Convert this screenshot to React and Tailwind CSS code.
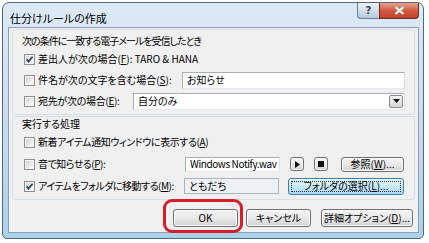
import React from 'react';

const U = ({ children }) => <span className="underline underline-offset-[1px]">{children}</span>;

const Check = ({ checked }) => (
    <svg width="11" height="11" viewBox="0 0 11 11" className="shrink-0">
        <defs>
            <linearGradient id="cbFill" x1="0" y1="0" x2="1" y2="1">
                <stop offset="0" stopColor="#d2d2d2" />
                <stop offset="1" stopColor="#fbfbfb" />
            </linearGradient>
        </defs>
        <rect x="0.5" y="0.5" width="10" height="10" fill="#f6f6f6" stroke="#8e8f8f" />
        <rect x="2" y="2" width="7" height="7" fill="url(#cbFill)" />
        {checked && <path d="M2.6 5.4 L4.5 7.6 L8.6 2.8" stroke="#23406e" strokeWidth="1.7" fill="none" />}
    </svg>
);

const Btn = ({ className = '', children }) => (
    <div className={`h-[18px] rounded-[3px] border border-[#707070] bg-linear-to-b from-[#f4f4f4] via-[#e9e9e9] to-[#d2d2d2] shadow-[inset_0_0_0_1px_#fbfbfb] flex items-center justify-center text-[10px] leading-none whitespace-nowrap ${className}`}>
        {children}
    </div>
);

const Box = ({ className = '', children }) => (
    <div className={`border border-[#abadb3] border-b-[#e3e9ef] border-r-[#dbdfe6] flex items-center pl-[4px] text-[10px] leading-none whitespace-nowrap overflow-hidden ${className}`}>
        {children}
    </div>
);

const Row = ({ className = '', children }) => (
    <div className={`h-[20px] flex items-center pl-[11px] ${className}`}>{children}</div>
);

const Label = ({ checked, className = '', children }) => (
    <div className="flex items-center gap-[3px] text-[10px] leading-none whitespace-nowrap">
        <Check checked={checked} />
        <span className={className}>{children}</span>
    </div>
);

export default function App() {
    return (
        <div className="w-[429px] h-[243px] bg-white overflow-hidden text-black font-['Noto_Sans_CJK_JP',sans-serif] [font-feature-settings:'palt']">
            {/* window frame */}
            <div className="ml-[2px] mt-[2px] w-[422px] h-[237px] rounded-t-[7px] rounded-b-[5px] border border-[#55657a] bg-linear-to-b from-[#dde9f6] via-[#c9dcef] to-[#a9d2ec] flex flex-col pl-[5px] pr-[4px] pb-[5px]">
                {/* title bar */}
                <div className="h-[24px] shrink-0 flex items-start">
                    <div className="pt-[9px] pl-[2px] text-[11px] leading-[13px]">仕分けルールの作成</div>
                    <div className="ml-auto flex">
                        <div className="w-[22px] h-[16px] rounded-bl-[4px] border border-t-0 border-r-0 border-[#6a7d95] bg-linear-to-b from-[#eef3f9] to-[#b6c9df] flex items-center justify-center text-[10px] leading-none text-[#3a4656] font-bold font-['DejaVu_Sans',sans-serif]">?</div>
                        <div className="w-[40px] h-[16px] rounded-br-[4px] border border-t-0 border-[#6e2a20] bg-linear-to-b from-[#e9a190] via-[#d25a41] to-[#c0402a] flex items-center justify-center">
                            <svg width="11" height="9" viewBox="0 0 11 9">
                                <path d="M1.5 1 L9.5 8 M9.5 1 L1.5 8" stroke="#fff" strokeWidth="2.2" />
                            </svg>
                        </div>
                    </div>
                </div>

                {/* client area */}
                <div className="flex-1 bg-[#f0f0f0] border border-[#8d9fb4] flex flex-col">
                    {/* conditions */}
                    <div className="mx-[3px] mt-[1px] border border-[#d5dfe5] rounded-[3px] pt-[4px] pb-[3px] pr-[9px] flex flex-col gap-[1px]">
                        <div className="h-[14px] pl-[9px] text-[10px] leading-[14px] tracking-[-1px]">次の条件に一致する電子メールを受信したとき</div>
                        <Row>
                            <Label checked>差出人が次の場合(<U>F</U>): TARO &amp; HANA</Label>
                        </Row>
                        <Row>
                            <Label>件名が次の文字を含む場合(<U>S</U>):</Label>
                            <Box className="ml-auto w-[223px] h-[17px] bg-white">お知らせ</Box>
                        </Row>
                        <Row>
                            <Label className="tracking-[-0.3px]">宛先が次の場合(<U>E</U>):</Label>
                            <Box className="ml-auto w-[272px] h-[17px] bg-white pr-[1px]">
                                <span>自分のみ</span>
                                <div className="ml-auto w-[14px] h-[13px] border border-[#8a8a8a] rounded-[2px] bg-linear-to-b from-[#f4f4f4] to-[#d6d6d6] flex items-center justify-center">
                                    <svg width="7" height="4" viewBox="0 0 7 4">
                                        <path d="M0 0 H7 L3.5 4 Z" fill="#111" />
                                    </svg>
                                </div>
                            </Box>
                        </Row>
                    </div>

                    {/* actions */}
                    <div className="mx-[3px] mt-[1px] border border-[#d5dfe5] rounded-[3px] pb-[3px] pr-[10px] flex flex-col gap-[2px]">
                        <div className="h-[14px] pl-[9px] text-[10px] leading-[14px] mb-[-1px]">実行する処理</div>
                        <Row>
                            <Label className="tracking-[-0.4px]">新着アイテム通知ウィンドウに表示する(<U>A</U>)</Label>
                        </Row>
                        <Row>
                            <Label className="tracking-[-0.5px]">音で知らせる(<U>P</U>):</Label>
                            <div className="ml-auto flex items-center">
                                <Box className="w-[95px] h-[15px] bg-white tracking-[-0.4px] pl-[3px]">Windows Notify.wav</Box>
                                <Btn className="ml-[10px] w-[14px] !h-[14px] rounded-[2px]">
                                    <svg width="5" height="7" viewBox="0 0 5 7"><path d="M0 0 L5 3.5 L0 7 Z" fill="#111" /></svg>
                                </Btn>
                                <Btn className="ml-[10px] w-[14px] !h-[14px] rounded-[2px]">
                                    <svg width="6" height="6" viewBox="0 0 6 6"><rect width="6" height="6" fill="#111" /></svg>
                                </Btn>
                                <Btn className="ml-[13px] w-[63px] !h-[15px]">参照(<U>W</U>)...</Btn>
                            </div>
                        </Row>
                        <Row>
                            <Label checked className="tracking-[-0.5px]">アイテムをフォルダに移動する(<U>M</U>):</Label>
                            <div className="ml-auto flex items-center">
                                <Box className="w-[95px] h-[16px] bg-[#eef1f4] !border-[#a9b3bf]">ともだち</Box>
                                <div className="ml-[9px] w-[116px] h-[17px] rounded-[3px] border border-[#3c7fb1] bg-linear-to-b from-[#eaf6fd] via-[#c9e8f8] to-[#a8d7f2] p-[2px]">
                                    <div className="h-full border border-dotted border-[#333] flex items-center justify-center text-[10px] leading-none">
                                        フォルダの選択(<U>L</U>)...
                                    </div>
                                </div>
                            </div>
                        </Row>
                    </div>

                    {/* buttons */}
                    <div className="mt-[9px] mr-[5px] flex justify-end">
                        <div className="relative">
                            <Btn className="w-[65px]">OK</Btn>
                            <div className="absolute -left-[10px] -right-[5px] -top-[10px] -bottom-[6px] border-[3px] border-[#d51f2b] rounded-[9px]" />
                        </div>
                        <Btn className="ml-[8px] w-[65px]">キャンセル</Btn>
                        <Btn className="ml-[10px] w-[92px]">詳細オプション(<U>D</U>)...</Btn>
                    </div>
                </div>
            </div>
        </div>
    );
}
